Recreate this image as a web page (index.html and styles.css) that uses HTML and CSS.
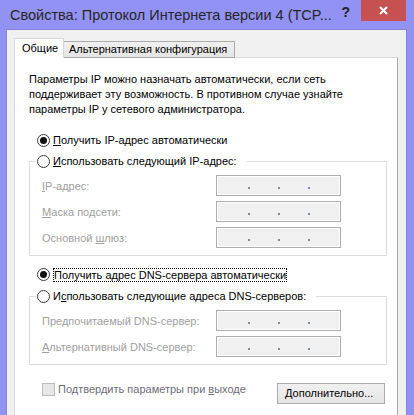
FILE: index.html
```html
<!DOCTYPE html>
<html lang="ru">
<head>
<meta charset="utf-8">
<title>Свойства: Протокол Интернета версии 4</title>
<link rel="stylesheet" href="styles.css">
</head>
<body>
<div class="window">
  <div class="titlebar">
    <div class="title">Свойства: Протокол Интернета версии 4 (TCP...</div>
    <div class="help">?</div>
    <div class="close">
      <svg width="9" height="9" viewBox="0 0 9 9"><path d="M1 1 L8 8 M8 1 L1 8" stroke="#fff" stroke-width="2" fill="none"/></svg>
    </div>
  </div>
  <div class="client">
    <div class="tabs">
      <div class="tab active">Общие</div>
      <div class="tab">Альтернативная конфигурация</div>
    </div>
    <div class="panel">
      <p class="intro">Параметры IP можно назначать автоматически, если сеть<br>поддерживает эту возможность. В противном случае узнайте<br>параметры IP у сетевого администратора.</p>

      <div class="radio-row first">
        <span class="radio checked"></span>
        <span class="rlabel"><u>П</u>олучить IP-адрес автоматически</span>
      </div>

      <fieldset class="group">
        <legend><span class="radio"></span><span class="rlabel"><u>И</u>спользовать следующий IP-адрес:</span></legend>
        <div class="fields">
          <div class="flabel"><u>I</u>P-адрес:</div>
          <div class="ipbox"><span class="dot"></span><span class="dot"></span><span class="dot"></span></div>
          <div class="flabel"><u>М</u>аска подсети:</div>
          <div class="ipbox"><span class="dot"></span><span class="dot"></span><span class="dot"></span></div>
          <div class="flabel">Основной <u>ш</u>люз:</div>
          <div class="ipbox"><span class="dot"></span><span class="dot"></span><span class="dot"></span></div>
        </div>
      </fieldset>

      <div class="radio-row dns">
        <span class="radio checked"></span>
        <span class="rlabel focus">Получить адрес DNS-сервера автоматически</span>
      </div>

      <fieldset class="group">
        <legend><span class="radio"></span><span class="rlabel">И<u>с</u>пользовать следующие адреса DNS-серверов:</span></legend>
        <div class="fields">
          <div class="flabel">Пре<u>д</u>почитаемый DNS-сервер:</div>
          <div class="ipbox"><span class="dot"></span><span class="dot"></span><span class="dot"></span></div>
          <div class="flabel"><u>А</u>льтернативный DNS-сервер:</div>
          <div class="ipbox"><span class="dot"></span><span class="dot"></span><span class="dot"></span></div>
        </div>
      </fieldset>

      <div class="bottom-row">
        <div class="check">
          <span class="checkbox"></span>
          <span class="clabel">Подтвердить параметры при <u>в</u>ыходе</span>
        </div>
        <div class="button"><u>Д</u>ополнительно...</div>
      </div>
    </div>
  </div>
</div>
</body>
</html>
```

FILE: styles.css
```css
* { box-sizing: border-box; }
html, body { margin: 0; padding: 0; }
body {
  width: 414px;
  height: 415px;
  overflow: hidden;
  font-family: "Liberation Sans", Arial, sans-serif;
  font-size: 11px;
  color: #000;
}
.window {
  width: 414px;
  height: 415px;
  background: #9292f4;
  display: flex;
  flex-direction: column;
  padding: 0 7px 0 6px;
}
.titlebar {
  height: 29px;
  display: flex;
  align-items: flex-start;
  margin: 0 -7px 0 -6px;
}
.title {
  flex: 1;
  min-width: 0;
  overflow: hidden;
  font-size: 14.5px;
  line-height: 18px;
  padding: 6px 0 0 10px;
  color: #262626;
  white-space: nowrap;
}
.help {
  font-size: 14px;
  font-weight: bold;
  line-height: 14px;
  padding-top: 5px;
  margin-right: 11px;
  color: #222;
}
.close {
  width: 45px;
  height: 21px;
  margin-right: 8px;
  background: #c75050;
  display: flex;
  align-items: center;
  justify-content: center;
}
.close svg { display: block; }
.client {
  flex: 1;
  background: #f0f0f0;
  border: 1px solid #8585dc;
  border-bottom: none;
  padding: 8px 8px 0 7px;
  display: flex;
  flex-direction: column;
}
.tabs {
  display: flex;
  align-items: flex-end;
  margin-bottom: -1px;
  position: relative;
  z-index: 1;
}
.tab {
  height: 17px;
  border: 1px solid #acacac;
  border-left: none;
  background: linear-gradient(#f0f0f0, #e5e5e5);
  padding: 0 7px 0 5px;
  line-height: 15px;
  white-space: nowrap;
}
.tab.active {
  height: 20px;
  width: 50px;
  border: 1px solid #d9d9d9;
  border-bottom: none;
  background: #fff;
  padding: 1px 0 0 7px;
  line-height: 17px;
}
.panel {
  flex: 1;
  background: #fff;
  border: 1px solid #d9d9d9;
  border-right-color: #a9a9a9;
  border-bottom: none;
  padding: 14px 10px 0 14px;
}
.intro {
  margin: 0;
  line-height: 15px;
  white-space: nowrap;
}
.radio-row {
  display: flex;
  align-items: center;
  height: 15px;
  margin-left: 8px;
}
.radio-row.first { margin-top: 16px; margin-bottom: 6px; }
.radio-row.dns { margin-top: 11px; margin-bottom: 7px; }
.radio {
  width: 13px;
  height: 13px;
  border: 1px solid #3a3a3a;
  border-radius: 50%;
  background: #fff;
  display: flex;
  align-items: center;
  justify-content: center;
  flex: none;
}
.radio.checked::after {
  content: "";
  width: 7px;
  height: 7px;
  border-radius: 50%;
  background: #111;
}
.rlabel {
  margin-left: 3px;
  line-height: 15px;
  white-space: nowrap;
}
.rlabel.focus {
  outline: 1px dotted #000;
  outline-offset: -1px;
  padding: 0 1px;
  line-height: 14px;
}
.group {
  margin: 0;
  padding: 0 0 7px 0;
  border: 1px solid #dcdcdc;
  min-width: 0;
}
.group legend {
  margin-left: 6px;
  padding: 0 10px 0 1px;
  display: flex;
  align-items: center;
  height: 15px;
}
.fields {
  display: grid;
  grid-template-columns: 174px 125px;
  row-gap: 5px;
  padding: 6px 0 0 12px;
  align-items: center;
}
.flabel {
  color: #a0a0a0;
  line-height: 15px;
  white-space: nowrap;
  padding-top: 1px;
}
.ipbox {
  height: 21px;
  border: 1px solid #adadad;
  box-shadow: inset 0 0 0 1px #fff;
  background: #f0f0f0;
  display: flex;
  align-items: flex-end;
  padding: 0 0 6px 31px;
  gap: 28px;
}
.dot {
  width: 2px;
  height: 2px;
  background: #7d8a98;
}
.bottom-row {
  display: flex;
  align-items: flex-start;
  margin-top: 18px;
  padding: 0 2px 0 13px;
}
.check {
  display: flex;
  align-items: center;
  height: 13px;
}
.checkbox {
  width: 13px;
  height: 13px;
  border: 1px solid #bcbcbc;
  background: #e6e6e6;
  flex: none;
}
.clabel {
  margin-left: 3px;
  color: #6d6d78;
  line-height: 15px;
  white-space: nowrap;
}
.button {
  margin-left: auto;
  flex: none;
  width: 108px;
  height: 21px;
  border: 1px solid #acacac;
  background: linear-gradient(#f0f0f0, #e5e5e5);
  padding-left: 7px;
  line-height: 19px;
  white-space: nowrap;
}
```
